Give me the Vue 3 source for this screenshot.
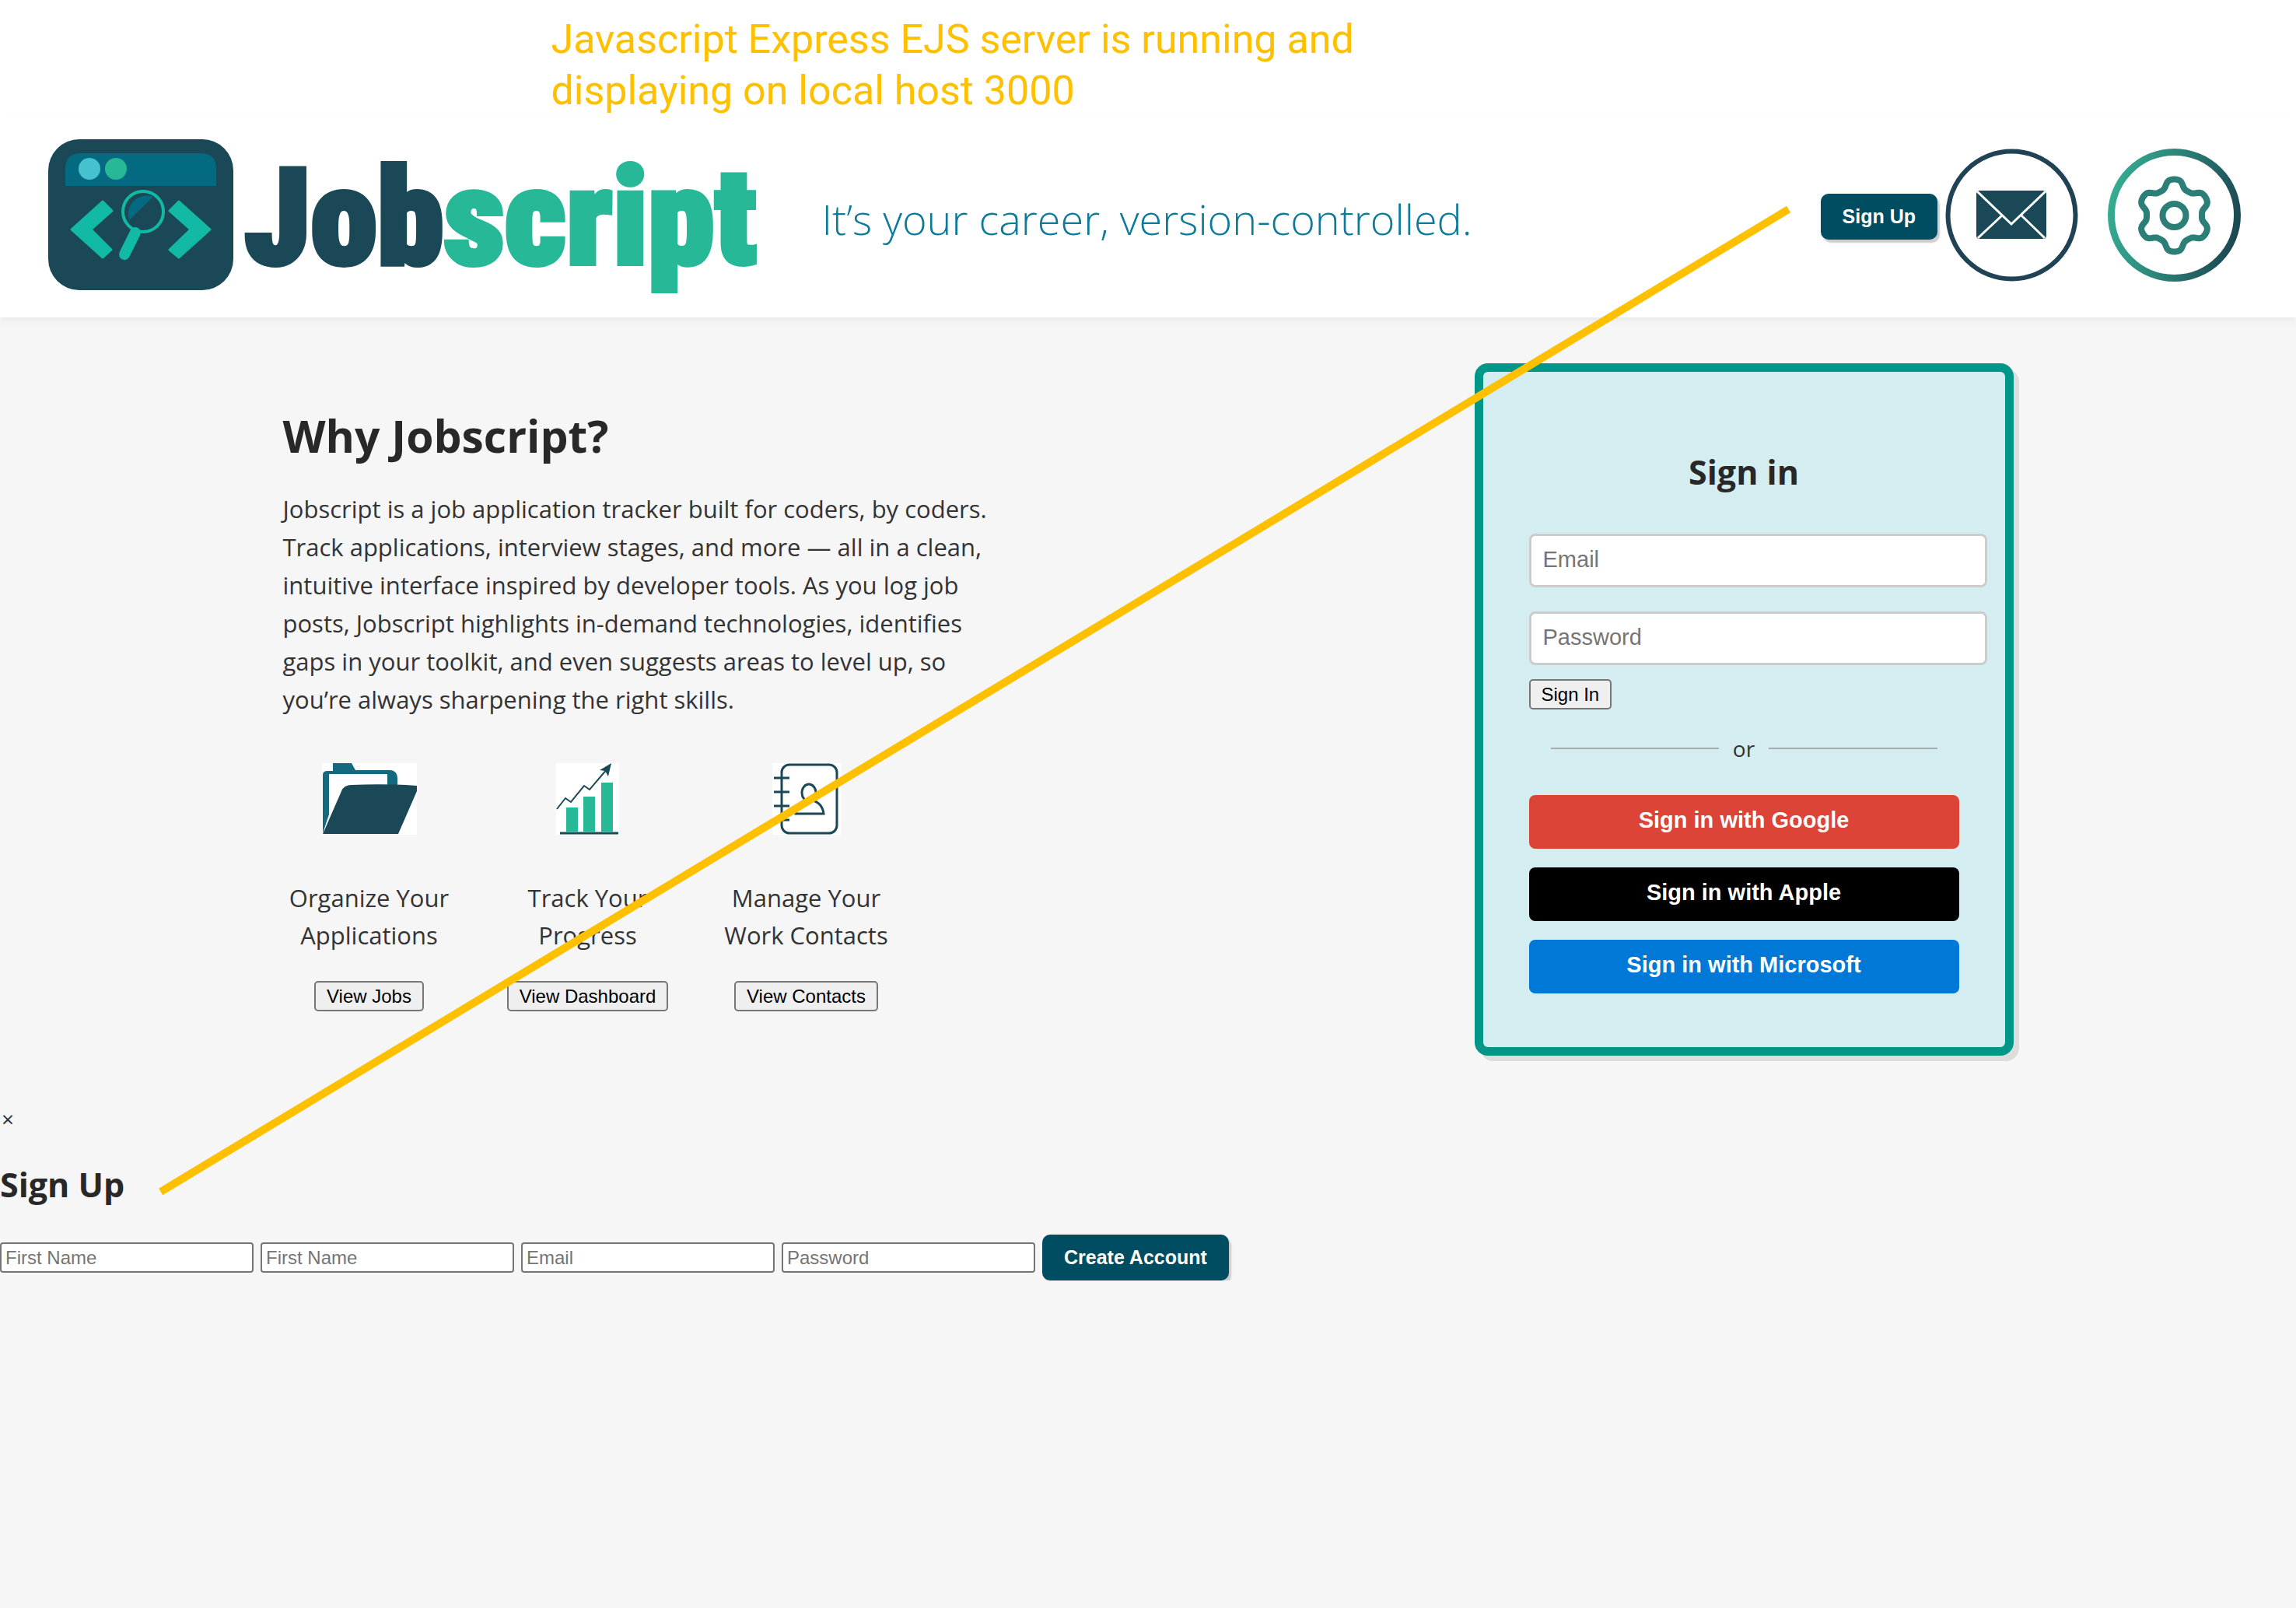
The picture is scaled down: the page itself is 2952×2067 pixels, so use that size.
<script setup>
const features = [
  { id: 'jobs', lines: ['Organize Your', 'Applications'], action: 'View Jobs' },
  { id: 'dashboard', lines: ['Track Your', 'Progress'], action: 'View Dashboard' },
  { id: 'contacts', lines: ['Manage Your', 'Work Contacts'], action: 'View Contacts' },
]

const providers = ['Google', 'Apple', 'Microsoft']

const signUpFields = [
  { id: 'first-name', type: 'text', label: 'First Name' },
  { id: 'last-name', type: 'text', label: 'First Name' },
  { id: 'new-email', type: 'email', label: 'Email' },
  { id: 'new-password', type: 'password', label: 'Password' },
]

// Outline of a six-toothed cog with rounded teeth, centred on 0,0
const gearPath = (() => {
  const points = []
  for (let deg = 0; deg < 360; deg += 3) {
    const a = (deg * Math.PI) / 180
    const r = 41 + 6 * Math.tanh(1.6 * Math.cos(6 * a))
    points.push(`${(r * Math.sin(a)).toFixed(1)} ${(-r * Math.cos(a)).toFixed(1)}`)
  }
  return `M${points.join('L')}Z`
})()
</script>

<template>
  <div class="page">
    <p class="note">Javascript Express EJS server is running and<br />displaying on local host 3000</p>

    <header class="header">
      <a class="logo" href="#" aria-label="Jobscript home">
        <svg class="logo-mark" viewBox="0 0 238 194" aria-hidden="true">
          <rect width="238" height="194" rx="40" fill="#1a4857" />
          <path d="M22 60V38Q22 18 42 18H196Q216 18 216 38V60Z" fill="#046a82" />
          <circle cx="53" cy="38" r="14" fill="#45c1cf" />
          <circle cx="87" cy="38" r="14" fill="#27b898" />
          <g fill="#12b9a4" stroke="#12b9a4" stroke-width="3" stroke-linejoin="round">
            <path d="M70 80L82 92L55 116L81 142L70 152L30 116Z" />
            <path d="M168 80L156 92L183 116L156 142L168 152L208 116Z" />
          </g>
          <path d="M104 104A24 24 0 0 1 135 74Z" fill="#046a82" />
          <circle cx="122" cy="93" r="26" fill="none" stroke="#12b9a4" stroke-width="4" />
          <path d="M112 120L98 148" stroke="#12b9a4" stroke-width="14" stroke-linecap="round" />
        </svg>
        <span class="logo-text"><span class="logo-job">Job</span><span class="logo-script">script</span></span>
      </a>
      <p class="tagline">It’s your career, version-controlled.</p>
      <nav class="nav">
        <button class="primary" type="button">Sign Up</button>
        <a class="nav-icon" href="#messages" aria-label="Messages">
          <svg viewBox="0 0 171 171">
            <circle cx="85.5" cy="85.5" r="82" fill="#fff" stroke="#1f4354" stroke-width="6" />
            <rect x="40" y="54" width="90" height="62" rx="4" fill="#1a4857" />
            <path d="M41 55L85 97L129 55M42 115L73 86M128 115L98 86" fill="none" stroke="#fff" stroke-width="3" />
          </svg>
        </a>
        <a class="nav-icon settings" href="#settings" aria-label="Settings">
          <svg viewBox="0 0 171 171">
            <defs>
              <linearGradient id="ring" x1="0" x2="1" y1="0.4" y2="0.6">
                <stop offset="0" stop-color="#35ab91" />
                <stop offset="0.5" stop-color="#2c7f76" />
                <stop offset="1" stop-color="#1c4853" />
              </linearGradient>
            </defs>
            <circle cx="85.5" cy="85.5" r="81" fill="#fff" stroke="url(#ring)" stroke-width="9" />
            <g transform="translate(85.5 86)" fill="none" stroke="#2b7f76">
              <path :d="gearPath" stroke-width="8" stroke-linejoin="round" />
              <circle r="15" stroke-width="8" />
            </g>
          </svg>
        </a>
      </nav>
    </header>

    <main class="main">
      <section class="why">
        <h1>Why Jobscript?</h1>
        <p class="intro">
          Jobscript is a job application tracker built for coders, by coders. Track applications, interview stages, and
          more — all in a clean, intuitive interface inspired by developer tools. As you log job posts, Jobscript
          highlights in-demand technologies, identifies gaps in your toolkit, and even suggests areas to level up, so
          you’re always sharpening the right skills.
        </p>
        <div class="features">
          <article v-for="f in features" :key="f.id" class="feature">
            <svg v-if="f.id === 'jobs'" width="122" height="92" viewBox="0 0 122 92" aria-hidden="true">
              <rect width="122" height="92" fill="#fff" />
              <path d="M1 90V15Q1 10 7 10H14V0H38L43 9H88Q97 10 97 20V30H84V14H9V66Z" fill="#15697f" />
              <path d="M1 91L25 36Q28 28 38 28Q80 26 122 29V36L98 91Z" fill="#1a4857" />
            </svg>
            <svg v-else-if="f.id === 'dashboard'" width="81" height="92" viewBox="0 0 81 92" aria-hidden="true">
              <rect width="81" height="92" fill="#fff" />
              <path d="M13 57H28V88H13ZM35 43H50V88H35ZM58 25H73V88H58Z" fill="#27b898" />
              <path d="M5 90H80" stroke="#1a4857" stroke-width="3" />
              <path d="M1 59L12 45L19 50L36 29L43 34L66 7" fill="none" stroke="#1a4857" stroke-width="2" />
              <path d="M71 0L56 9L63 10L67 17Z" fill="#1a4857" />
            </svg>
            <svg v-else width="88" height="92" viewBox="0 0 88 92" aria-hidden="true">
              <rect width="88" height="92" fill="#fff" />
              <g fill="none" stroke="#1a4857" stroke-width="3">
                <rect x="12" y="2" width="71" height="88" rx="10" />
                <path d="M2 19H22M2 37H22M2 55H22M2 73H22" />
                <path d="M30 65Q31 49 47 47Q64 49 66 65Z" />
                <ellipse cx="47" cy="38" rx="9" ry="11" fill="#fff" />
              </g>
            </svg>
            <p>{{ f.lines[0] }}<br />{{ f.lines[1] }}</p>
            <button class="plain" type="button">{{ f.action }}</button>
          </article>
        </div>
      </section>

      <section class="card">
        <h2>Sign in</h2>
        <form class="sign-in" @submit.prevent>
          <input type="email" placeholder="Email" aria-label="Email" />
          <input type="password" placeholder="Password" aria-label="Password" />
          <button class="plain" type="submit">Sign In</button>
        </form>
        <div class="divider">or</div>
        <div class="providers">
          <button v-for="p in providers" :key="p" type="button" :class="['provider', p.toLowerCase()]">
            Sign in with {{ p }}
          </button>
        </div>
      </section>
    </main>

    <section class="sign-up">
      <button class="close" type="button" aria-label="Close">×</button>
      <h2>Sign Up</h2>
      <form class="sign-up-form" @submit.prevent>
        <input v-for="s in signUpFields" :key="s.id" :type="s.type" :placeholder="s.label" :aria-label="s.label" />
        <button class="primary" type="submit">Create Account</button>
      </form>
    </section>

    <svg class="connector" aria-hidden="true">
      <line x1="7%" y1="1532" x2="77.9%" y2="269" stroke="#ffc000" stroke-width="10" />
    </svg>
  </div>
</template>

<style>
body {
  margin: 0;
  background: #f6f6f6;
}
</style>

<style scoped>
.page {
  position: relative;
  font-family: 'Open Sans', 'Noto Sans', sans-serif;
  color: #333;
}
h1,
h2,
p {
  margin: 0;
}
h1,
h2 {
  color: #282828;
  font-weight: 700;
}
h2 {
  font-size: 43px;
  line-height: 56px;
}
button,
input {
  box-sizing: border-box;
  margin: 0;
  font-family: 'Liberation Sans', Arial, sans-serif;
}
::placeholder {
  color: #757575;
  opacity: 1;
}

.note {
  padding: 18px 0 0 24%;
  background: #fff;
  color: #ffc000;
  font-family: Roboto, sans-serif;
  font-size: 52px;
  line-height: 66px;
}

.header {
  display: flex;
  align-items: center;
  box-sizing: border-box;
  padding: 29px 71px 35px 62px;
  background: #fff;
  box-shadow: 0 4px 8px rgba(0, 0, 0, 0.05);
}
.logo {
  display: flex;
  align-items: center;
  gap: 14px;
  text-decoration: none;
}
.logo-mark {
  width: 238px;
  height: 194px;
}
.logo-text {
  padding-top: 8px;
  font-family: 'Roboto Condensed', Roboto, sans-serif;
  font-size: 173px;
  font-weight: 900;
  line-height: 180px;
}
.logo-job {
  color: #1a4857;
  -webkit-text-stroke: 6px #1a4857;
}
.logo-script {
  color: #27b898;
  -webkit-text-stroke: 6px #27b898;
}
.tagline {
  margin-left: 84px;
  padding-top: 10px;
  color: #0b7a9b;
  font-size: 54px;
  font-weight: 300;
  line-height: 64px;
}
.nav {
  display: flex;
  align-items: center;
  gap: 10px;
  margin-left: auto;
}
.nav-icon,
.nav-icon svg {
  display: block;
  width: 171px;
  height: 171px;
}
.settings {
  margin-left: 28px;
}
.primary {
  height: 59px;
  padding: 0 28px;
  border: 0;
  border-radius: 10px;
  background: #004d61;
  box-shadow: 3px 4px 2px #ccc;
  color: #fff;
  font-size: 25px;
  font-weight: 700;
}
.nav .primary {
  margin-top: 4px;
}

.main {
  display: flex;
  justify-content: space-between;
  align-items: flex-start;
  max-width: 2225px;
  margin: 0 auto;
  padding: 59px 0 58px;
}
.why {
  width: 925px;
  padding-top: 55px;
}
h1 {
  font-size: 57px;
  line-height: 76px;
}
.intro {
  margin-top: 32px;
  font-size: 31px;
  line-height: 49px;
}
.features {
  display: flex;
  gap: 59px;
  margin-top: 57px;
}
.feature {
  display: flex;
  flex-direction: column;
  align-items: center;
  width: 222px;
  font-size: 31px;
  line-height: 48px;
  text-align: center;
}
.feature p {
  margin: 57px 0 35px;
}
.plain {
  height: 39px;
  padding: 0 14px;
  border: 2px solid #767676;
  border-radius: 5px;
  background: #efefef;
  color: #000;
  font-size: 24px;
  white-space: nowrap;
}

.card {
  box-sizing: border-box;
  width: 693px;
  padding: 101px 59px 69px;
  border: 11px solid #009688;
  border-radius: 17px;
  background: #d4edf0;
  box-shadow: 7px 7px 0 #ddd;
}
.card h2 {
  text-align: center;
}
.sign-in {
  display: flex;
  flex-direction: column;
  align-items: flex-start;
  margin-top: 51px;
}
.sign-in input {
  width: calc(100% + 36px);
  height: 69px;
  margin-bottom: 31px;
  padding: 0 15px 2px;
  border: 3px solid #ccc;
  border-radius: 8px;
  background: #fff;
  font-size: 29px;
}
.sign-in input + input {
  margin-bottom: 18px;
}
.divider {
  display: flex;
  align-items: center;
  gap: 18px;
  margin: 29px 28px 39px;
  font-size: 28px;
  line-height: 42px;
}
.divider::before,
.divider::after {
  content: '';
  flex: 1;
  height: 2px;
  background: #aaa;
}
.providers {
  display: flex;
  flex-direction: column;
  gap: 24px;
}
.provider {
  height: 69px;
  padding: 0 0 4px;
  border: 0;
  border-radius: 8px;
  color: #fff;
  font-size: 29px;
  font-weight: 700;
}
.google {
  background: #db4437;
}
.apple {
  background: #000;
}
.microsoft {
  background: #0078d7;
}

.close {
  display: block;
  padding: 0 2px;
  border: 0;
  background: none;
  color: #333;
  font-family: inherit;
  font-size: 28px;
  line-height: 46px;
}
.sign-up h2 {
  margin: 34px 0 36px;
}
.sign-up-form {
  display: flex;
  align-items: center;
  gap: 9px;
}
.sign-up-form input {
  width: 326px;
  height: 39px;
  padding: 0 5px;
  border: 2px solid #767676;
  border-radius: 4px;
  background: #fff;
  font-size: 24px;
}

/* Pointer drawn over the page, from the Sign Up button to its form */
.connector {
  position: absolute;
  top: 0;
  left: 0;
  width: 100%;
  height: 100%;
  pointer-events: none;
}
</style>
